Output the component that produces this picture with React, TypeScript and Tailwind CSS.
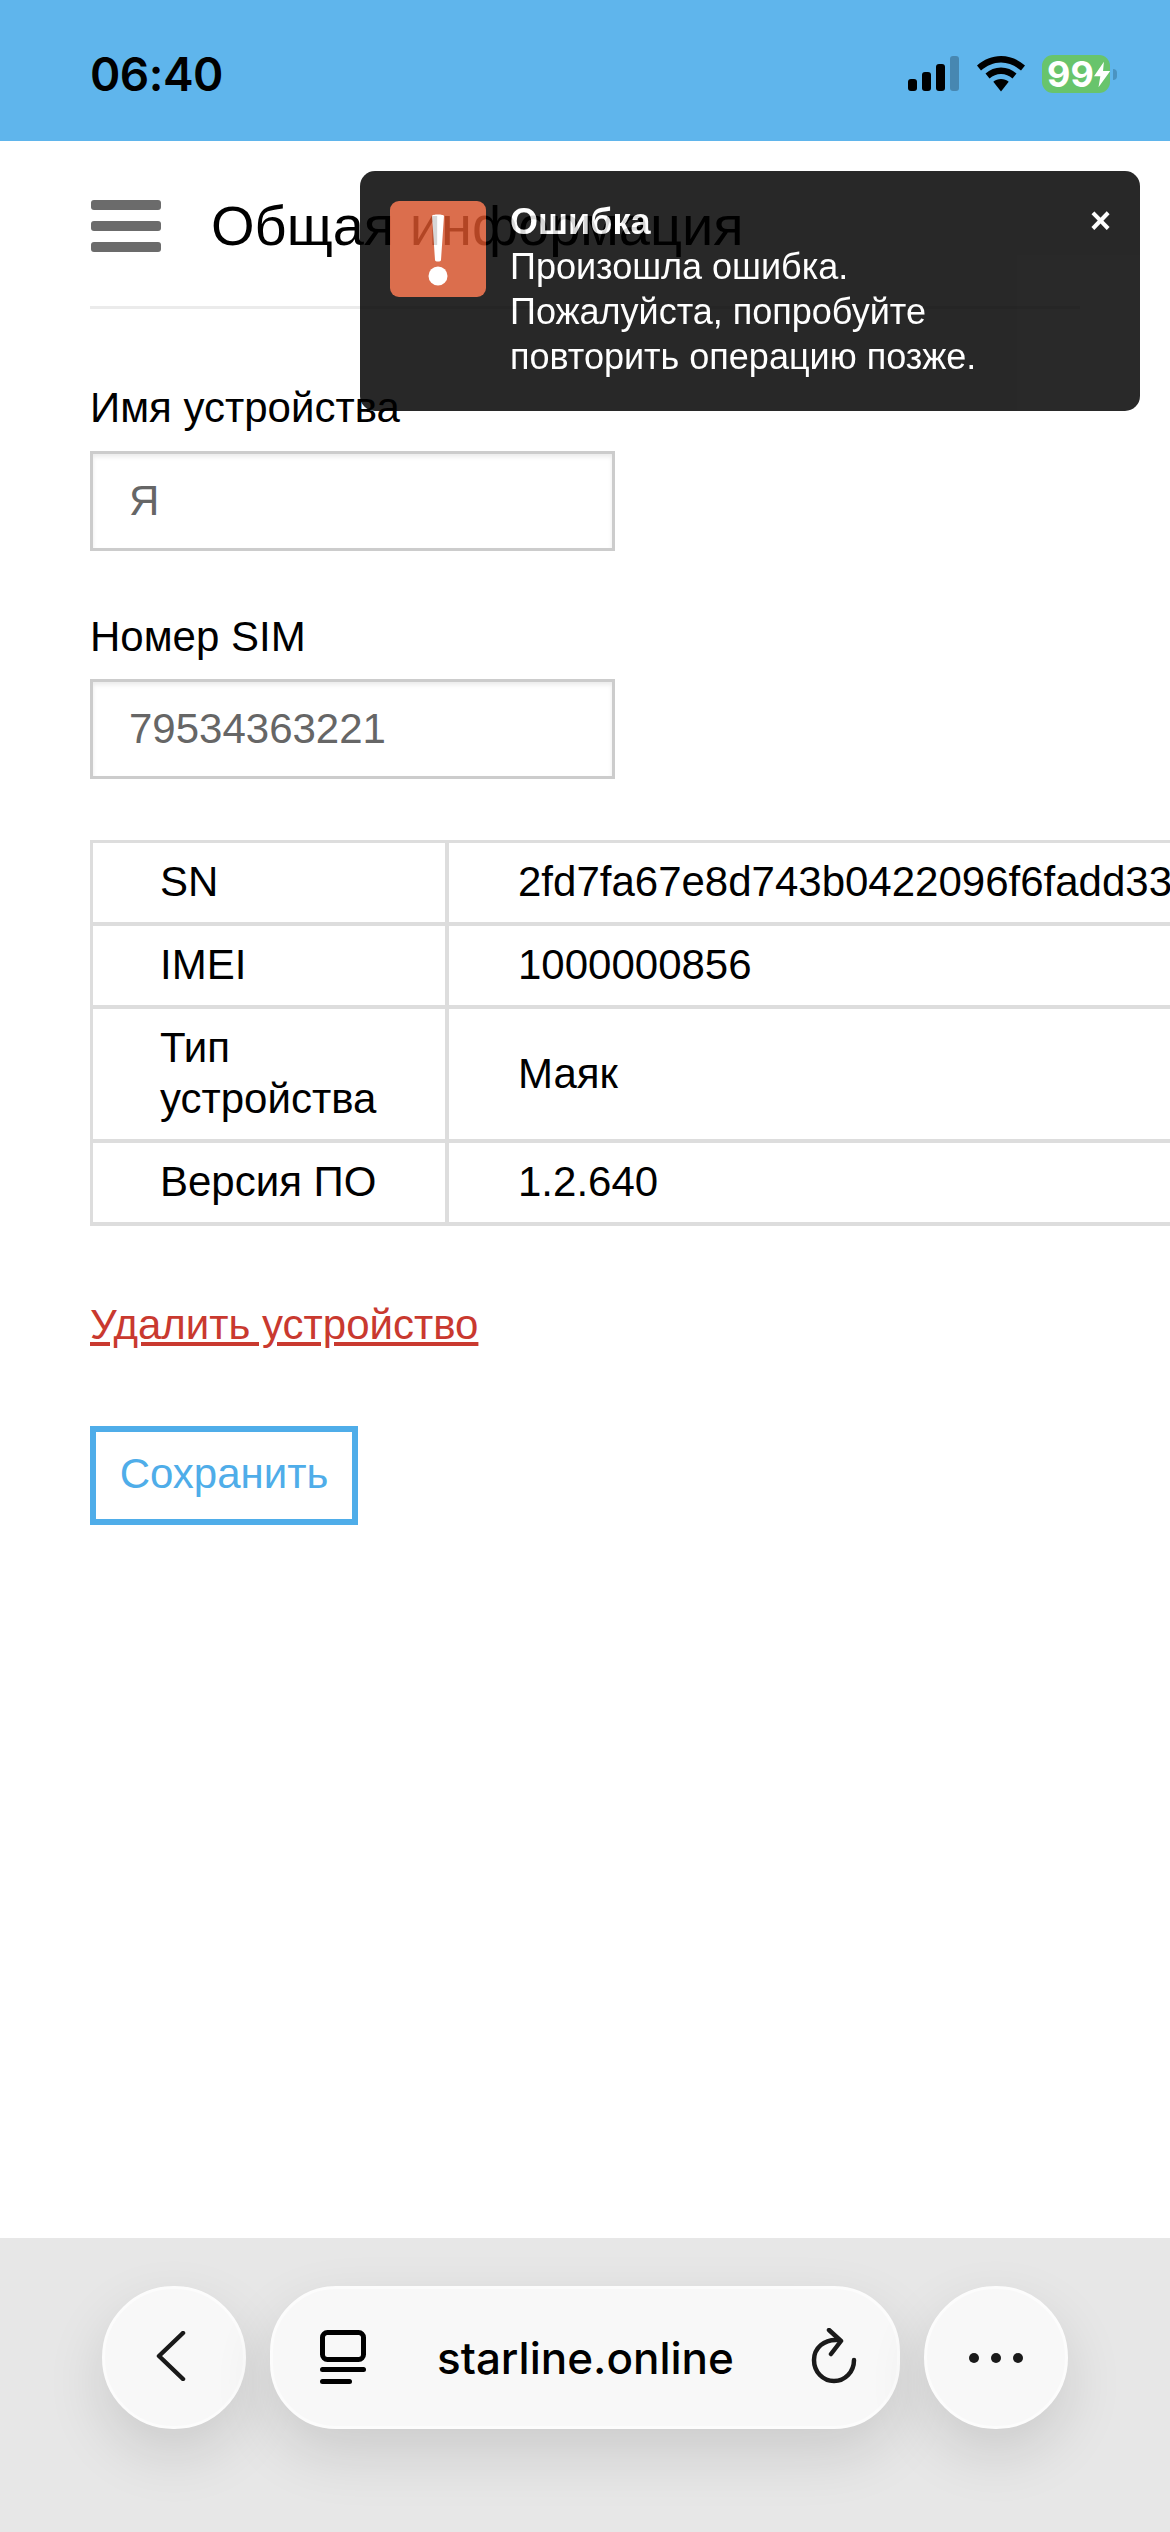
import React from 'react';

const rows = [
    { label: 'SN', value: '2fd7fa67e8d743b0422096f6fadd33' },
    { label: 'IMEI', value: '1000000856' },
    { label: 'Тип устройства', value: 'Маяк' },
    { label: 'Версия ПО', value: '1.2.640' },
];

const StatusIcons = () => (
    <div className="flex items-center">
        <svg width="52" height="36" viewBox="0 0 52 36" className="mr-[17px]">
            <rect x="0" y="23" width="9" height="12" rx="3" fill="#000" />
            <rect x="14" y="16" width="9" height="19" rx="3" fill="#000" />
            <rect x="28" y="8" width="9" height="27" rx="3" fill="#000" />
            <rect x="42" y="0" width="9" height="35" rx="3" fill="#000" fillOpacity="0.25" />
        </svg>
        <svg width="48" height="36" viewBox="0 0 48 36" className="mr-[17px]">
            <path d="M24 0C15 0 7 3.500 0 9.500L4 14.500C10 9.500 16.500 6.500 24 6.500C31.500 6.500 38 9.500 44 14.500L48 9.500C41 3.500 33 0 24 0Z" fill="#000" />
            <path d="M24 11.500C18 11.500 13 13.800 8.500 17.500L12.500 22.500C16 19.700 19.500 18 24 18C28.500 18 32 19.700 35.500 22.500L39.500 17.500C35 13.800 30 11.500 24 11.500Z" fill="#000" />
            <path d="M24 23C21 23 18.500 24 16.300 25.800L24 35.500L31.700 25.800C29.500 24 27 23 24 23Z" fill="#000" />
        </svg>
        <div className="relative flex h-[38px] w-[68px] items-center rounded-[11px] bg-[#68c46c] pl-[5px]">
            <span className="font-['Inter',sans-serif] text-[36px] font-bold leading-none text-white">99</span>
            <svg width="17" height="29" viewBox="0 0 18 28">
                <path d="M11 0L0 16H7L5 28L18 10H10L11 0Z" fill="#fff" />
            </svg>
            <div className="absolute right-[-7px] top-[14px] h-[11px] w-[4px] rounded-r-full bg-[#4a93c1]" />
        </div>
    </div>
);

const Toast = () => (
    <div className="absolute left-[360px] top-[171px] flex h-[240px] w-[780px] rounded-[15px] bg-black pl-[30px] pt-[30px] opacity-[0.84]">
        <div className="flex h-[96px] w-[96px] shrink-0 items-center justify-center rounded-[9px] bg-[#d5532c]">
            <svg width="24" height="72" viewBox="0 0 24 72" className="mt-[2px] blur-[0.6px]">
                <path d="M6 2C6 0 18 0 18 2L15 46C15 48 9 48 9 46Z" fill="#fff" />
                <circle cx="12" cy="62" r="9.500" fill="#fff" />
            </svg>
        </div>
        <div className="ml-[24px] font-['Liberation_Sans',sans-serif] text-[36px] leading-[45px] text-white">
            <div className="-mt-[2px] font-bold">Ошибка</div>
            <div>Произошла ошибка.</div>
            <div>Пожалуйста, попробуйте</div>
            <div>повторить операцию позже.</div>
        </div>
        <div className="absolute right-[29px] top-[27px] font-['Liberation_Sans',sans-serif] text-[36px] font-bold leading-[45px] text-white">×</div>
    </div>
);

export default function App() {
    return (
        <div className="relative flex min-h-[2532px] flex-col overflow-hidden bg-white font-['Liberation_Sans',sans-serif] text-black">
            {/* Status bar */}
            <div className="flex h-[141px] items-center justify-between bg-[#5fb5ec] pl-[90px] pr-[60px] pt-[7px]">
                <span className="font-['Inter',sans-serif] text-[46px] font-semibold leading-none tracking-[-0.5px]">06:40</span>
                <StatusIcons />
            </div>

            {/* Page */}
            <div className="flex-1 px-[90px]">
                <div className="flex h-[168px] w-[990px] items-center border-b-[3px] border-[#ebebeb] pt-[5px]">
                    <div className="ml-[1px] flex w-[70px] flex-col gap-[11px] blur-[0.7px]">
                        <div className="h-[10px] rounded-[3px] bg-[#6b6b6b]" />
                        <div className="h-[10px] rounded-[3px] bg-[#6b6b6b]" />
                        <div className="h-[10px] rounded-[3px] bg-[#6b6b6b]" />
                    </div>
                    <h1 className="ml-[50px] text-[56px] font-normal leading-none">Общая информация</h1>
                </div>

                <label className="mt-[75px] block text-[42px] leading-[48px]">Имя устройства</label>
                <input
                    readOnly
                    value="Я"
                    className="mt-[19px] block h-[100px] w-[525px] border-[3px] border-[#ccc] bg-white px-[36px] text-[42px] text-[#666] shadow-[inset_0_3px_4px_rgba(0,0,0,0.08)] outline-none"
                />
                <label className="mt-[62px] block text-[42px] leading-[48px]">Номер SIM</label>
                <input
                    readOnly
                    value="79534363221"
                    className="mt-[18px] block h-[100px] w-[525px] border-[3px] border-[#ccc] bg-white px-[36px] text-[42px] text-[#666] shadow-[inset_0_3px_4px_rgba(0,0,0,0.08)] outline-none"
                />

                <table className="mt-[61px] w-[1200px] table-fixed border-separate border-spacing-0 border-l-[3px] border-t-[3px] border-[#ddd] text-[42px] leading-[51px]">
                    <tbody>
                        {rows.map((row) => (
                            <tr key={row.label}>
                                <td className="w-[356px] border-b-[4px] border-r-[4px] border-[#ddd] pb-[15px] pt-[13px] pl-[67px] pr-[30px]">{row.label}</td>
                                <td className="whitespace-nowrap border-b-[4px] border-r-[4px] border-[#ddd] pb-[2px] pl-[69px]">{row.value}</td>
                            </tr>
                        ))}
                    </tbody>
                </table>

                <a className="mt-[75px] block text-[42px] leading-[48px] text-[#c9392f] underline">Удалить устройство</a>

                <button className="mt-[77px] block h-[99px] w-[268px] border-[6px] border-[#4fade9] pb-[4px] text-[42px] text-[#4fade9]">
                    Сохранить
                </button>
            </div>

            {/* Browser toolbar */}
            <div className="flex h-[294px] gap-[24px] bg-[#e7e7e7] pl-[102px] pt-[48px]">
                <div className="flex h-[143px] w-[144px] items-center justify-center rounded-full border-[3px] border-[#fcfcfc] bg-[#f8f8f8] shadow-[0_24px_60px_rgba(0,0,0,0.12)]">
                    <svg width="30" height="50" viewBox="0 0 30 50" fill="none" className="mb-[4px] ml-[-6px]">
                        <path d="M27 2L3 25L27 48" stroke="#1a1a1a" strokeWidth="4.500" strokeLinecap="round" strokeLinejoin="round" />
                    </svg>
                </div>
                <div className="flex h-[143px] w-[630px] items-center rounded-[66px] border-[3px] border-[#fcfcfc] bg-[#f8f8f8] pl-[47px] pr-[40px] shadow-[0_24px_60px_rgba(0,0,0,0.12)]">
                    <svg width="46" height="54" viewBox="0 0 46 54" fill="none" className="mb-[2px] shrink-0">
                        <rect x="2.500" y="2.500" width="41" height="27" rx="5" stroke="#000" strokeWidth="5" />
                        <rect x="0" y="37" width="46" height="5" rx="2.500" fill="#000" />
                        <rect x="0" y="49" width="32" height="5" rx="2.500" fill="#000" />
                    </svg>
                    <span className="ml-[71px] font-['Inter',sans-serif] text-[44px] font-medium leading-none">starline.online</span>
                    <svg width="46" height="56" viewBox="0 0 46 56" fill="none" className="ml-auto mb-[4px] shrink-0">
                        <path d="M27 12C13 11 3 20 3 32C3 44 12 53 23 53C34 53 43 44 43 32" stroke="#1a1a1a" strokeWidth="4.500" strokeLinecap="round" />
                        <path d="M18 2L30 13L20 26" stroke="#1a1a1a" strokeWidth="4.500" strokeLinecap="round" strokeLinejoin="round" />
                    </svg>
                </div>
                <div className="flex h-[143px] w-[144px] items-center justify-center gap-[12px] rounded-full border-[3px] border-[#fcfcfc] bg-[#f8f8f8] shadow-[0_24px_60px_rgba(0,0,0,0.12)]">
                    <div className="h-[10px] w-[10px] rounded-full bg-[#1a1a1a]" />
                    <div className="h-[10px] w-[10px] rounded-full bg-[#1a1a1a]" />
                    <div className="h-[10px] w-[10px] rounded-full bg-[#1a1a1a]" />
                </div>
            </div>

            <Toast />
        </div>
    );
}
